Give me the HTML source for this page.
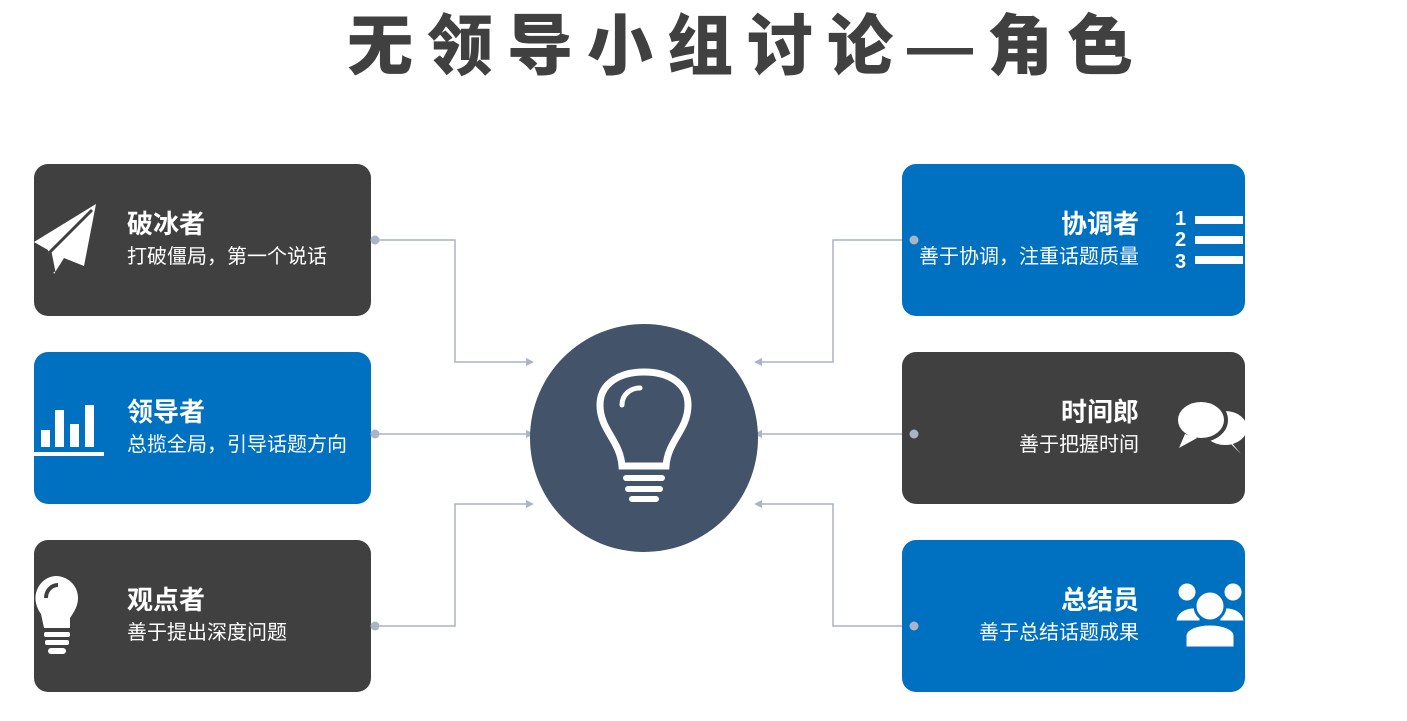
<!DOCTYPE html>
<html><head><meta charset="utf-8"><style>
body{margin:0;width:1407px;height:721px;background:#fff;position:relative;overflow:hidden;font-family:"Liberation Sans","Noto Sans CJK SC",sans-serif}
h1{position:absolute;left:0;width:1494px;top:4px;margin:0;text-align:center;font-size:66px;font-weight:900;color:#404040;letter-spacing:14px;line-height:84px}
.c{position:absolute;width:337px;height:152px;border-radius:14px;color:#fff;overflow:hidden}
.r{width:343px}
.d{background:#404040}.b{background:#0070c0}
.t{position:absolute;font-size:26px;font-weight:bold;top:43px;line-height:34px}
.s{position:absolute;font-size:20px;top:80px;line-height:26px;white-space:nowrap}
.c.r .t,.c.r .s{right:106px;text-align:right}
.c:not(.r) .t,.c:not(.r) .s{left:93px}
svg.ic{position:absolute}
</style></head><body>
<h1>无领导小组讨论—角色</h1>
<svg width="1407" height="721" style="position:absolute;left:0;top:0">
<g stroke="#aab4c4" stroke-width="1.5" fill="none">
<polyline points="375,240 455,240 455,362 528,362"/>
<polyline points="375,434 528,434"/>
<polyline points="375,626 455,626 455,504 528,504"/>
<polyline points="914,240 833,240 833,362 760,362"/>
<polyline points="914,434 760,434"/>
<polyline points="914,626 833,626 833,504 760,504"/>
</g>
<g fill="#aab4c4">
<path d="M534,362 l-8,-4 v8z M534,434 l-8,-4 v8z M534,504 l-8,-4 v8z M754,362 l8,-4 v8z M754,434 l8,-4 v8z M754,504 l8,-4 v8z"/>
</g>
<circle cx="644" cy="438" r="114" fill="#435369"/>
<g fill="none" stroke="#fff" stroke-width="7" stroke-linecap="round">
<path d="M622,466 C620,440 600,430 600,405 C600,383 620,372 644,372 C668,372 688,383 688,405 C688,430 668,440 666,466 Z"/>
<path d="M622,405 C622,395 630,388 640,388" stroke-width="5"/>
<path d="M626,478 H662 M628,489 H660 M632,499 H656" stroke-width="6"/>
</g>
</svg>
<div class="c d" style="left:34px;top:164px"><svg class="ic" style="left:0;top:38px" width="66" height="76" viewBox="0 0 66 76"><path d="M62,2 L0,40 L14,48 L20,72 L30,56 L50,64 Z" fill="#fff"/><path d="M58,8 L16,50 L20,70" stroke="#404040" stroke-width="3" fill="none"/></svg><div class="t">破冰者</div><div class="s">打破僵局，第一个说话</div></div>
<div class="c b" style="left:34px;top:352px"><svg class="ic" style="left:0;top:50px" width="72" height="58"><g fill="#fff"><rect x="7" y="28" width="9" height="17"/><rect x="21" y="8" width="9" height="37"/><rect x="36" y="22" width="9" height="23"/><rect x="51" y="3" width="9" height="42"/><rect x="0" y="50" width="70" height="4"/></g></svg><div class="t">领导者</div><div class="s">总揽全局，引导话题方向</div></div>
<div class="c d" style="left:34px;top:540px"><svg class="ic" style="left:0;top:34px" width="50" height="84"><g fill="#fff"><path d="M7,40 C0,30 0,20 5,12 C10,4 18,2 22,2 C32,2 44,10 44,24 C44,32 40,38 36,44 L36,54 L10,54 Z"/><rect x="10" y="58" width="26" height="5" rx="2"/><rect x="11" y="66" width="24" height="5" rx="2"/><rect x="14" y="74" width="18" height="6" rx="3"/></g><path d="M12,24 C12,16 18,11 24,11" stroke="#404040" stroke-width="4" fill="none"/></svg><div class="t">观点者</div><div class="s">善于提出深度问题</div></div>
<div class="c r b" style="left:902px;top:164px"><svg class="ic" style="left:273px;top:44px" width="70" height="70"><g fill="#fff" font-weight="bold" font-family="Liberation Sans" font-size="20"><text x="0" y="17">1</text><text x="0" y="38">2</text><text x="0" y="60">3</text></g><g fill="#fff"><rect x="20" y="8" width="48" height="8"/><rect x="20" y="28" width="48" height="8"/><rect x="20" y="48" width="48" height="8"/></g></svg><div class="t">协调者</div><div class="s">善于协调，注重话题质量</div></div>
<div class="c r d" style="left:902px;top:352px"><svg class="ic" style="left:273px;top:46px" width="70" height="60"><g fill="#fff"><ellipse cx="50" cy="30" rx="22" ry="17"/><path d="M52,42 L66,56 L56,44Z"/><ellipse cx="26" cy="22" rx="25" ry="20" stroke="#404040" stroke-width="4"/><path d="M10,36 L4,50 L22,40Z"/></g></svg><div class="t">时间郎</div><div class="s">善于把握时间</div></div>
<div class="c r b" style="left:902px;top:540px"><svg class="ic" style="left:273px;top:40px" width="70" height="70"><g fill="#fff" stroke="#0070c0" stroke-width="3"><circle cx="12" cy="12" r="10"/><circle cx="58" cy="12" r="10"/><path d="M0,42 C0,26 24,24 26,30 L26,42Z"/><path d="M70,42 C70,26 46,24 44,30 L44,42Z"/><circle cx="35" cy="26" r="15"/><path d="M10,68 L10,56 C10,40 60,40 60,56 L60,68Z"/></g></svg><div class="t">总结员</div><div class="s">善于总结话题成果</div></div>
<svg width="1407" height="721" style="position:absolute;left:0;top:0;pointer-events:none">
<g fill="#aab4c4">
<circle cx="375" cy="240" r="4.5"/><circle cx="375" cy="434" r="4.5"/><circle cx="375" cy="626" r="4.5"/>
<circle cx="914" cy="240" r="4.5"/><circle cx="914" cy="434" r="4.5"/><circle cx="914" cy="626" r="4.5"/>
</g></svg>
</body></html>
